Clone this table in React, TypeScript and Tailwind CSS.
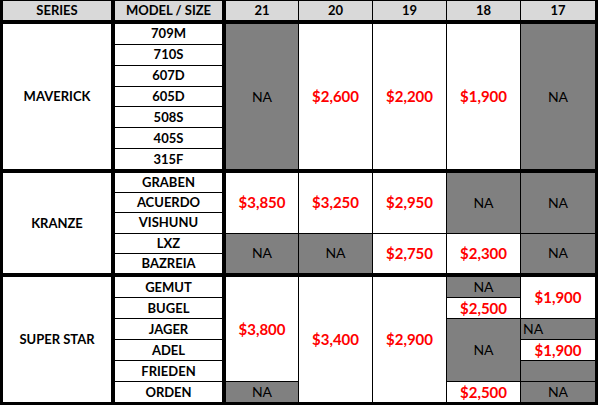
import React from "react";

const GRID = "grid grid-cols-[111px_110px_72px_73px_73px_73px_74px] gap-px";
const BASE = "flex items-center justify-center leading-none";
const HEAD = `${BASE} bg-[#d9d9d9] text-[13px] font-bold text-black`;
const SERIES = `${BASE} bg-white border-r-[3px] border-black text-[13px] font-bold text-black`;
const MODEL = `${BASE} bg-white border-r-[3px] border-black text-[13px] font-bold text-black`;
const PRICE = `${BASE} bg-white text-[15px] font-bold text-[#ff0000]`;
const NA = `${BASE} bg-[#808080] text-[14px] text-black`;

function Models({ names }: { names: string[] }) {
  const rows = [
    "row-start-1",
    "row-start-2",
    "row-start-3",
    "row-start-4",
    "row-start-5",
    "row-start-6",
    "row-start-7",
  ];
  return (
    <>
      {names.map((n, i) => (
        <div key={n} className={`${MODEL} col-start-2 ${rows[i]}`}>
          {n}
        </div>
      ))}
    </>
  );
}

export default function App() {
  return (
    <div className="w-[598px] h-[405px] bg-black pt-px px-[3px] pb-[3px] flex flex-col gap-1 font-[Lato,sans-serif]">
      {/* Header */}
      <div className={`${GRID} h-[19px] shrink-0`}>
        <div className={`${HEAD} border-r-[3px] border-black`}>SERIES</div>
        <div className={`${HEAD} border-r-[3px] border-black`}>MODEL / SIZE</div>
        <div className={HEAD}>21</div>
        <div className={HEAD}>20</div>
        <div className={HEAD}>19</div>
        <div className={HEAD}>18</div>
        <div className={HEAD}>17</div>
      </div>

      {/* Maverick */}
      <div className={`${GRID} grid-rows-7 h-[145px] shrink-0`}>
        <div className={`${SERIES} col-start-1 row-start-1 row-span-7`}>MAVERICK</div>
        <Models names={["709M", "710S", "607D", "605D", "508S", "405S", "315F"]} />
        <div className={`${NA} col-start-3 row-start-1 row-span-7`}>NA</div>
        <div className={`${PRICE} col-start-4 row-start-1 row-span-7`}>$2,600</div>
        <div className={`${PRICE} col-start-5 row-start-1 row-span-7`}>$2,200</div>
        <div className={`${PRICE} col-start-6 row-start-1 row-span-7`}>$1,900</div>
        <div className={`${NA} col-start-7 row-start-1 row-span-7`}>NA</div>
      </div>

      {/* Kranze */}
      <div className={`${GRID} grid-rows-5 h-[100px] shrink-0`}>
        <div className={`${SERIES} col-start-1 row-start-1 row-span-5`}>KRANZE</div>
        <Models names={["GRABEN", "ACUERDO", "VISHUNU", "LXZ", "BAZREIA"]} />
        <div className={`${PRICE} col-start-3 row-start-1 row-span-3`}>$3,850</div>
        <div className={`${PRICE} col-start-4 row-start-1 row-span-3`}>$3,250</div>
        <div className={`${PRICE} col-start-5 row-start-1 row-span-3`}>$2,950</div>
        <div className={`${NA} col-start-6 row-start-1 row-span-3`}>NA</div>
        <div className={`${NA} col-start-7 row-start-1 row-span-3`}>NA</div>
        <div className={`${NA} col-start-3 row-start-4 row-span-2`}>NA</div>
        <div className={`${NA} col-start-4 row-start-4 row-span-2`}>NA</div>
        <div className={`${PRICE} col-start-5 row-start-4 row-span-2`}>$2,750</div>
        <div className={`${PRICE} col-start-6 row-start-4 row-span-2`}>$2,300</div>
        <div className={`${NA} col-start-7 row-start-4 row-span-2`}>NA</div>
      </div>

      {/* Super Star */}
      <div className={`${GRID} grid-rows-6 h-[125px] shrink-0`}>
        <div className={`${SERIES} col-start-1 row-start-1 row-span-6`}>SUPER STAR</div>
        <Models names={["GEMUT", "BUGEL", "JAGER", "ADEL", "FRIEDEN", "ORDEN"]} />
        <div className={`${PRICE} col-start-3 row-start-1 row-span-5`}>$3,800</div>
        <div className={`${NA} col-start-3 row-start-6`}>NA</div>
        <div className={`${PRICE} col-start-4 row-start-1 row-span-6`}>$3,400</div>
        <div className={`${PRICE} col-start-5 row-start-1 row-span-6`}>$2,900</div>
        <div className={`${NA} col-start-6 row-start-1`}>NA</div>
        <div className={`${PRICE} col-start-6 row-start-2`}>$2,500</div>
        <div className={`${NA} col-start-6 row-start-3 row-span-3`}>NA</div>
        <div className={`${PRICE} col-start-6 row-start-6`}>$2,500</div>
        <div className={`${PRICE} col-start-7 row-start-1 row-span-2`}>$1,900</div>
        <div className={`${NA} col-start-7 row-start-3 !justify-start pl-0.5`}>NA</div>
        <div className={`${PRICE} col-start-7 row-start-4`}>$1,900</div>
        <div className="bg-[#808080] col-start-7 row-start-5" />
        <div className={`${NA} col-start-7 row-start-6`}>NA</div>
      </div>
    </div>
  );
}
